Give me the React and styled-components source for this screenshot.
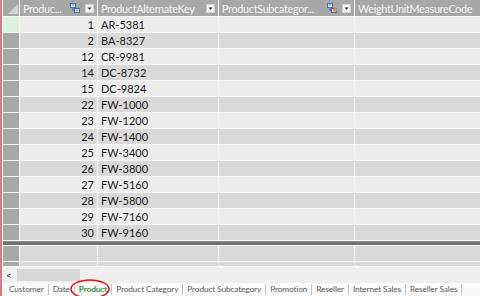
import styled, { createGlobalStyle } from 'styled-components';

const GlobalStyle = createGlobalStyle`
  html, body {
    margin: 0;
    padding: 0;
    background: #ffffff;
    overflow: hidden;
  }
`;

const COLS = '16px 77px 120px 135px 1fr';

const Frame = styled.div`
  width: 480px;
  height: 296px;
  display: flex;
  flex-direction: column;
  box-sizing: border-box;
  border-left: 2px solid #cf7f80;
  font-family: Lato, "Open Sans", sans-serif;
  overflow: hidden;
`;

const Table = styled.div`
  display: flex;
  flex-direction: column;
  gap: 1px;
  padding-left: 1px;
  background: #f6f6f6;
`;

const Row = styled.div`
  display: grid;
  grid-template-columns: ${COLS};
  gap: 1px;
  height: ${p => p.$h || 15}px;
`;

const HeaderCell = styled.div`
  background: #a7a7a7;
  color: #f4f4f4;
  font-size: 10.8px;
  letter-spacing: -0.3px;
  display: flex;
  align-items: center;
  gap: 5px;
  padding: 0 3px;
  white-space: nowrap;
  overflow: hidden;
`;

const HeaderLabel = styled.span`
  flex: 1 1 0;
  min-width: 0;
  overflow: hidden;
`;

const IconSlot = styled.span`
  flex: none;
  display: flex;
`;

const Corner = styled.div`
  background: #a7a7a7;
  display: flex;
  align-items: flex-end;
  justify-content: flex-end;
  padding: 0 1px 2px 0;
`;

const Selector = styled.div`
  background: ${p => (p.$active ? '#def2e2' : '#a8a8a8')};
`;

const Cell = styled.div`
  background: ${p => (p.$dark ? '#d9d9d9' : '#ededed')};
  color: #1c1c1c;
  font-size: 11px;
  line-height: 15px;
  padding: 0 3px;
  text-align: ${p => (p.$num ? 'right' : 'left')};
  white-space: nowrap;
  overflow: hidden;
`;

const Splitter = styled.div`
  height: 4px;
  background: #727272;
  border-top: 1px solid #8a8a8a;
  box-sizing: border-box;
`;

const ScrollArea = styled.div`
  height: 16px;
  background: #efefef;
  display: flex;
  align-items: center;
  padding-left: 3px;
  gap: 4px;
  margin-top: 1px;
`;

const ArrowGlyph = styled.span`
  font-size: 10px;
  color: #333;
  width: 8px;
  text-align: center;
`;

const Thumb = styled.div`
  width: 63px;
  height: 12px;
  background: #d7d7d7;
`;

const TabBar = styled.div`
  flex: 1;
  background: #fafafa;
  display: flex;
  align-items: center;
  padding-left: 3px;
`;

const Tab = styled.div`
  position: relative;
  font-size: 8.3px;
  letter-spacing: -0.12px;
  color: ${p => (p.$active ? '#3f8f45' : '#5a5a5a')};
  font-weight: ${p => (p.$active ? 700 : 400)};
  padding: 0 4px;
  line-height: 11px;
  border-right: 1px solid #c6c6c6;
  white-space: nowrap;
`;

const Ring = styled.svg`
  position: absolute;
  left: -6px;
  top: -7px;
  pointer-events: none;
`;

const RelationIcon = ({ dot }) => (
  <IconSlot>
    <svg width="10" height="10" viewBox="0 0 10 10">
      <rect x="0.5" y="0.5" width="5" height="4" fill="#ffffff" stroke="#3d6fb5" />
      <rect x="1.5" y="1.5" width="3" height="1" fill="#3d6fb5" />
      <path d="M3 5 V7.5 H4.5" stroke="#3d6fb5" fill="none" />
      <rect x="4.5" y="5.5" width="5" height="4" fill="#ffffff" stroke="#3d6fb5" />
      <rect x="5.5" y="6.5" width="3" height="1" fill="#3d6fb5" />
      {dot && <circle cx="8" cy="7" r="2" fill="#e9902c" />}
    </svg>
  </IconSlot>
);

const DropButton = () => (
  <IconSlot>
    <svg width="9" height="9" viewBox="0 0 9 9">
      <rect x="0.5" y="0.5" width="8" height="8" fill="#f4f4f4" stroke="#d2d2d2" />
      <path d="M2.5 3.5 H6.5 L4.5 6 Z" fill="#3a3a3a" />
    </svg>
  </IconSlot>
);

const rows = [
  [1, 'AR-5381'],
  [2, 'BA-8327'],
  [12, 'CR-9981'],
  [14, 'DC-8732'],
  [15, 'DC-9824'],
  [22, 'FW-1000'],
  [23, 'FW-1200'],
  [24, 'FW-1400'],
  [25, 'FW-3400'],
  [26, 'FW-3800'],
  [27, 'FW-5160'],
  [28, 'FW-5800'],
  [29, 'FW-7160'],
  [30, 'FW-9160'],
];

const tabs = [
  'Customer',
  'Date',
  'Product',
  'Product Category',
  'Product Subcategory',
  'Promotion',
  'Reseller',
  'Internet Sales',
  'Reseller Sales',
];

export default function App() {
  return (
    <>
      <GlobalStyle />
      <Frame>
        <Table>
          <Row $h={16}>
            <Corner>
              <svg width="10" height="10" viewBox="0 0 10 10">
                <path d="M10 0 V10 H0 Z" fill="#d3d3d3" />
              </svg>
            </Corner>
            <HeaderCell>
              <HeaderLabel>Produc...</HeaderLabel>
              <RelationIcon />
              <DropButton />
            </HeaderCell>
            <HeaderCell>
              <HeaderLabel>ProductAlternateKey</HeaderLabel>
              <DropButton />
            </HeaderCell>
            <HeaderCell>
              <HeaderLabel>ProductSubcategor...</HeaderLabel>
              <RelationIcon dot />
              <DropButton />
            </HeaderCell>
            <HeaderCell>
              <HeaderLabel>WeightUnitMeasureCode</HeaderLabel>
            </HeaderCell>
          </Row>
          {rows.map(([key, alt], i) => (
            <Row key={key}>
              <Selector $active={i === 0} />
              <Cell $dark={i % 2 === 1} $num>{key}</Cell>
              <Cell $dark={i % 2 === 1}>{alt}</Cell>
              <Cell $dark={i % 2 === 1} />
              <Cell $dark={i % 2 === 1} />
            </Row>
          ))}
          <Splitter />
          <Row>
            <Selector />
            <Cell $dark />
            <Cell $dark />
            <Cell $dark />
            <Cell $dark />
          </Row>
          <Row $h={4}>
            <Selector />
            <Cell $dark />
            <Cell $dark />
            <Cell $dark />
            <Cell $dark />
          </Row>
        </Table>
        <ScrollArea>
          <ArrowGlyph>&lt;</ArrowGlyph>
          <Thumb />
        </ScrollArea>
        <TabBar>
          {tabs.map(t => (
            <Tab key={t} $active={t === 'Product'}>
              {t}
              {t === 'Product' && (
                <Ring width="44" height="24" viewBox="0 0 44 24">
                  <ellipse cx="21" cy="12" rx="19" ry="9" fill="none" stroke="#d81c1c" strokeWidth="1.6" />
                </Ring>
              )}
            </Tab>
          ))}
        </TabBar>
      </Frame>
    </>
  );
}
